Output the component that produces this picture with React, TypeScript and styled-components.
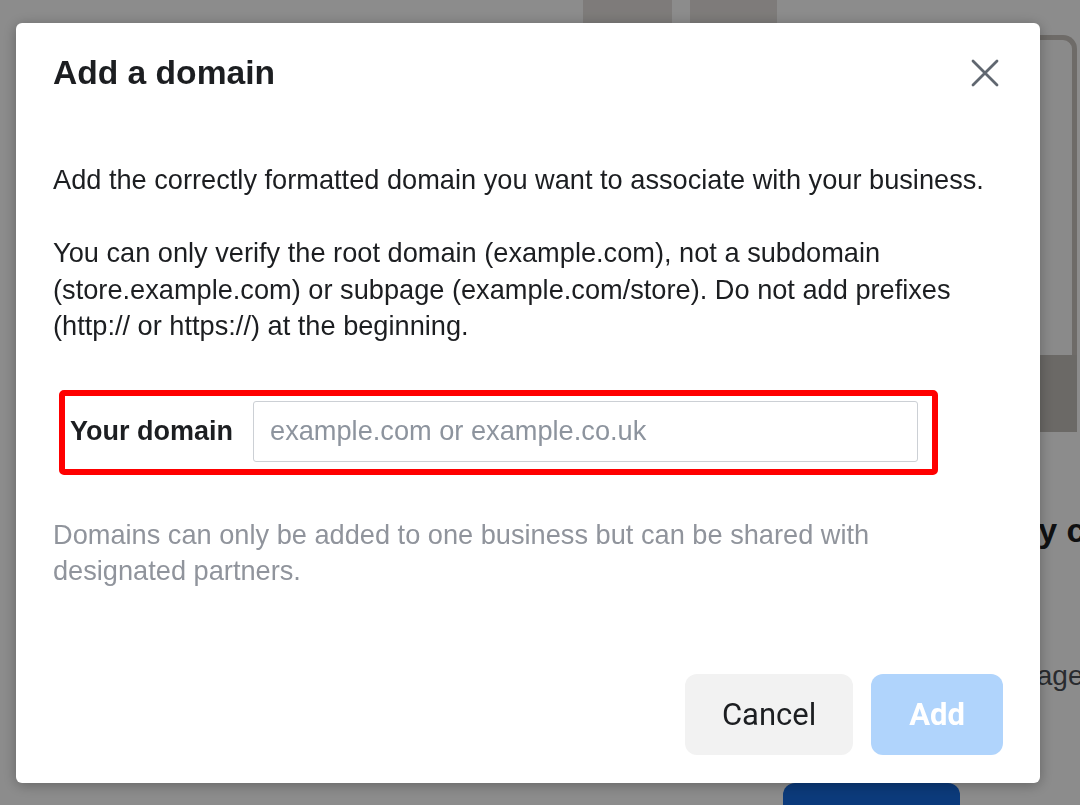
import React from "react";
import styled, { createGlobalStyle } from "styled-components";

const GlobalStyle = createGlobalStyle`
  html, body {
    margin: 0;
    padding: 0;
    overflow: hidden;
  }
  body {
    font-family: "Liberation Sans", Arial, sans-serif;
    background: #ffffff;
  }
  * {
    box-sizing: border-box;
  }
`;

// Page behind the dialog
const Page = styled.div`
  display: flex;
  align-items: flex-start;
  height: 805px;
  overflow: hidden;
  background: #ffffff;
`;

const Tiles = styled.div`
  display: flex;
  gap: 18px;
  margin-left: 583px;
`;

const Tile = styled.div<{ $w: number }>`
  width: ${(p) => p.$w}px;
  height: 260px;
  background: #e5e1de;
`;

const SideColumn = styled.div`
  display: flex;
  flex-direction: column;
  width: 294px;
  margin-left: auto;
  margin-right: 3px;
  padding-top: 35px;
  white-space: nowrap;
`;

const Illustration = styled.div`
  height: 320px;
  border: 5px solid #c8c3bd;
  border-bottom: none;
  border-radius: 14px 14px 0 0;
  background: #fcfcfc;
`;

const Band = styled.div`
  height: 77px;
  background: #c3bfba;
`;

const SideHeading = styled.div`
  margin-top: 78px;
  padding-left: 38px;
  font-size: 34px;
  line-height: 40px;
  font-weight: bold;
  color: #1c1e21;
`;

const SideText = styled.div`
  margin-top: 108px;
  padding-left: 67px;
  font-size: 28px;
  line-height: 36px;
  color: #4b4f56;
`;

const SideButton = styled.div`
  margin-top: 89px;
  width: 177px;
  height: 60px;
  border-radius: 12px;
  background: #156be0;
`;

// Dialog
const Backdrop = styled.div`
  position: fixed;
  inset: 0;
  display: flex;
  padding: 23px 40px 22px 16px;
  background: rgba(0, 0, 0, 0.45);
`;

const Modal = styled.div`
  flex: 1;
  display: flex;
  flex-direction: column;
  padding: 0 37px 28px 37px;
  background: #ffffff;
  border-radius: 6px;
  box-shadow: 0 2px 14px rgba(0, 0, 0, 0.3);
`;

const Header = styled.div`
  display: flex;
  align-items: center;
  justify-content: space-between;
  padding-top: 30px;
`;

const Title = styled.h2`
  margin: 0;
  font-size: 33.6px;
  line-height: 40px;
  font-weight: bold;
  color: #1c1e21;
`;

const CloseButton = styled.button`
  display: flex;
  padding: 0;
  margin-right: 4px;
  border: none;
  background: none;
  cursor: pointer;
`;

const Body = styled.div`
  margin-top: 69px;
  font-size: 27.2px;
  line-height: 36.5px;
  color: #1c1e21;
`;

const Paragraph = styled.p<{ $gap?: number; $muted?: boolean }>`
  margin: ${(p) => p.$gap ?? 0}px 0 0 0;
  color: ${(p) => (p.$muted ? "#90949c" : "#1c1e21")};
`;

const Highlight = styled.div`
  display: flex;
  align-items: center;
  width: 879px;
  margin: 45px 0 0 6px;
  padding: 5px 14px 7px 5px;
  border: 6px solid #ff0000;
  border-radius: 5px;
`;

const Label = styled.label`
  font-size: 27px;
  font-weight: bold;
  color: #1c1e21;
  white-space: nowrap;
`;

const Input = styled.input`
  flex: 1;
  height: 61px;
  margin-left: 20px;
  padding: 0 16px;
  border: 1px solid #ccd0d5;
  border-radius: 3px;
  font-family: "Liberation Sans", Arial, sans-serif;
  font-size: 27.2px;
  color: #1c1e21;
  outline: none;

  &::placeholder {
    color: #8d949e;
  }
`;

const Footer = styled.div`
  display: flex;
  justify-content: flex-end;
  gap: 18px;
  margin-top: auto;
`;

const Button = styled.button<{ $primary?: boolean }>`
  height: 81px;
  padding: 0 ${(p) => (p.$primary ? 38 : 37)}px;
  border: none;
  border-radius: 12px;
  font-family: Roboto, "Liberation Sans", Arial, sans-serif;
  font-size: 31px;
  font-weight: ${(p) => (p.$primary ? 700 : 400)};
  color: ${(p) => (p.$primary ? "#ffffff" : "#1c1e21")};
  background: ${(p) => (p.$primary ? "#b0d4fc" : "#f2f2f2")};
  cursor: ${(p) => (p.$primary ? "default" : "pointer")};
`;

const CloseIcon = () => (
  <svg width="28" height="28" viewBox="0 0 28 28" fill="none">
    <path
      d="M2 2 L26 26 M26 2 L2 26"
      stroke="#606770"
      strokeWidth="2.8"
      strokeLinecap="round"
    />
  </svg>
);

const App: React.FC = () => {
  return (
    <>
      <GlobalStyle />
      <Page>
        <Tiles>
          <Tile $w={89} />
          <Tile $w={87} />
        </Tiles>
        <SideColumn>
          <Illustration />
          <Band />
          <SideHeading>Add and verify company domains</SideHeading>
          <SideText>Verify and manage your domains</SideText>
          <SideButton />
        </SideColumn>
      </Page>

      <Backdrop>
        <Modal role="dialog" aria-labelledby="add-domain-title">
          <Header>
            <Title id="add-domain-title">Add a domain</Title>
            <CloseButton aria-label="Close">
              <CloseIcon />
            </CloseButton>
          </Header>

          <Body>
            <Paragraph>
              Add the correctly formatted domain you want to associate with
              your business.
            </Paragraph>
            <Paragraph $gap={36.5}>
              You can only verify the root domain (example.com), not a
              subdomain (store.example.com) or subpage (example.com/store). Do
              not add prefixes (http:// or https://) at the beginning.
            </Paragraph>

            <Highlight>
              <Label htmlFor="domain">Your domain</Label>
              <Input id="domain" placeholder="example.com or example.co.uk" />
            </Highlight>

            <Paragraph $gap={42} $muted>
              Domains can only be added to one business but can be shared with
              designated partners.
            </Paragraph>
          </Body>

          <Footer>
            <Button>Cancel</Button>
            <Button $primary disabled>
              Add
            </Button>
          </Footer>
        </Modal>
      </Backdrop>
    </>
  );
};

export default App;
